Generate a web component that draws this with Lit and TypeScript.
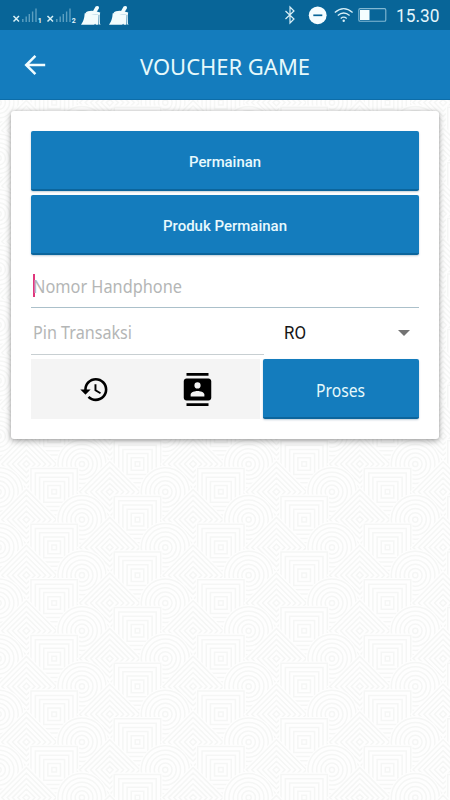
import { LitElement, html, svg, css } from "lit";
import { customElement, property } from "lit/decorators.js";

const COL = 27.78;
const ROW = 55.6;

const rings = [2.6, 6.8, 11, 15.3, 19.6, 24];
const circlePath = rings.map((r) => `M${-r} 0a${r} ${r} 0 1 0 ${2 * r} 0a${r} ${r} 0 1 0 ${-2 * r} 0z`).join("");
const squarePath = [2.3, 6.3, 10.4, 14.6, 18.8, 23.2].map((r) => `M${-r} ${-r}h${2 * r}v${2 * r}h${-2 * r}z`).join("");
const diamondPath = [3.4, 8.6, 13.9, 19.2, 24.6, 30].map((r) => `M0 ${-r}L${r} 0L0 ${r}L${-r} 0z`).join("");
const shapes = [circlePath, diamondPath, squarePath];

/** Repeating circles, diamonds and squares behind the form. */
@customElement("pattern-backdrop")
export class PatternBackdrop extends LitElement {
  static styles = css`
    :host { display: block; }
    svg { display: block; width: 100%; height: 100%; }
    .shape { stroke: #f5f6f5; stroke-width: 1.5; fill: none; }
    .cover { fill: #fefefe; stroke: none; }
  `;
  render() {
    const items = [];
    for (let half = -1; half < 28; half++) {
      for (let c = -1; c < 18; c++) {
        if ((((c + half) % 2) + 2) % 2 !== 0) continue;
        const kind = (c + 3) % 3;
        const x = -1.4 + c * COL;
        const y = 2.6 + (half * ROW) / 2;
        const cover =
          kind === 0 ? svg`<circle class="cover" r="26"/>`
          : kind === 1 ? svg`<path class="cover" d="M0-33L33 0L0 33L-33 0z"/>`
          : svg`<path class="cover" d="M-25-25h50v50h-50z"/>`;
        items.push(svg`<g transform="translate(${x} ${y})">${cover}<path class="shape" d=${shapes[kind]}/></g>`);
      }
    }
    return html`<svg viewBox="0 0 450 700" preserveAspectRatio="xMidYMin slice">${items}</svg>`;
  }
}

/** A single line of text fitted to a given width. */
@customElement("fit-text")
export class FitText extends LitElement {
  @property() text = "";
  @property({ type: Number }) width = 100;
  @property({ type: Number }) size = 18;
  static styles = css`
    :host { display: block; line-height: 0; }
    svg { display: block; overflow: visible; }
    text { fill: currentColor; }
  `;
  render() {
    return html`<svg width=${this.width} height=${this.size}>
      <text x="0" y=${this.size * 0.86} font-size=${this.size} textLength=${this.width} lengthAdjust="spacingAndGlyphs">${this.text}</text>
    </svg>`;
  }
}

@customElement("status-bar")
export class StatusBar extends LitElement {
  static styles = css`
    :host { display: block; height: 30px; background: #086598; color: #e4f6fb; }
    svg { display: block; }
    .digit { font: 700 7px Roboto, sans-serif; fill: #e4f6fb; }
    .clock { font: 400 17.5px Roboto, sans-serif; fill: #e4f6fb; }
  `;
  private signal(x: number, n: string) {
    return svg`<g transform="translate(${x} 0)">
      <path d="M0.5 16l5.5 5.5M6 16l-5.5 5.5" stroke="#d8f0f5" stroke-width="1.5"/>
      <path d="M9.8 22v-3M13.2 22v-5.5M16.3 22v-8M19.6 22v-10.5M23 22v-13.5" stroke="#5c9fc0" stroke-width="1.4"/>
      <text class="digit" x="24.7" y="23">${n}</text>
    </g>`;
  }
  private broom(x: number) {
    return svg`<g transform="translate(${x} 0)" fill="#f2fcfd">
      <path d="M11.5 12L14.6 6.6Q15.8 5.4 17.4 6.3Q18.4 7.2 17.8 8.4L15.6 12z"/>
      <path d="M7 11.2Q12 9.9 19.2 12.4L18.8 15L4.2 13.8Q5 11.6 7 11.2z"/>
      <path d="M3.7 13.2L17 14.8L17.2 24.8H14.8L14.2 23.8L13.2 24.8H0Q3.4 20 3.7 13.2z"/>
      <path d="M17.3 14.5h1.4l.2 9 .8 1.1h-2z"/>
    </g>`;
  }
  render() {
    return html`<svg width="450" height="30">
      ${this.signal(13, "1")}${this.signal(47, "2")}
      ${this.broom(81)}${this.broom(109)}
      <path d="M285.5 11l8.5 8-4 4V7l4 4-8.5 8" fill="none" stroke="#d8eff7" stroke-width="1.2"/>
      <circle cx="317.7" cy="15.3" r="8.9" fill="#f5fdff"/>
      <path d="M313.3 15.3h9" stroke="#086598" stroke-width="1.7"/>
      <g fill="none" stroke="#d8eff7" stroke-width="1.3">
        <path d="M334.8 12.4Q343.7 5 352.6 12.4"/><path d="M337.8 15.6Q343.7 10.4 349.6 15.6"/><path d="M340.7 18.4Q343.7 16 346.7 18.4"/>
      </g>
      <circle cx="343.7" cy="20.8" r="1.2" fill="#d8eff7"/>
      <rect x="358.8" y="8.6" width="27" height="12.6" rx="1.3" fill="none" stroke="#82b9d3" stroke-width="1.1"/>
      <rect x="360" y="10" width="9.5" height="10" fill="#f5fdff"/>
      <text class="clock" x="396" y="22" textLength="43.5" lengthAdjust="spacingAndGlyphs">15.30</text>
    </svg>`;
  }
}

@customElement("app-root")
export class AppRoot extends LitElement {
  static styles = css`
    :host { display: flex; flex-direction: column; height: 800px; width: 450px; background: #fefefe; overflow: hidden; font-family: "Noto Sans", "Open Sans", sans-serif; }
    .bar { height: 70px; box-sizing: border-box; flex: none; background: #147cbd; border-bottom: 1px solid #0d6da8; display: grid; grid-template-columns: 140px 1fr; align-items: center; color: #e6f9fb; }
    .back { display: block; margin-left: 21px; }
    .title { margin-top: 5px; }
    .body { position: relative; flex: 1; min-height: 0; padding: 11px 11px 0; }
    .backdrop { position: absolute; inset: 0; }
    .card { position: relative; box-sizing: border-box; height: 328px; padding: 20px 20px 0; background: #fff; border-radius: 3px; box-shadow: 0 2px 6px rgba(0,0,0,.34), 0 0 3px rgba(0,0,0,.15); display: flex; flex-direction: column; }
    .btn { display: flex; align-items: center; justify-content: center; box-sizing: border-box; background: #147cbd; color: #e8f9fd; border: 0; border-bottom: 2px solid #0c659c; border-radius: 2px; padding: 0; box-shadow: 0 1px 2px rgba(0,60,100,.25); font-family: inherit; }
    .wide { height: 60px; flex: none; margin-bottom: 4px; font-family: Roboto, sans-serif; font-weight: 500; padding-top: 3px; }
    .phone { height: 49px; box-sizing: border-box; border-bottom: 1px solid #abc0ca; display: flex; align-items: center; padding-top: 7px; color: #b4b6b6; }
    .caret { width: 2px; height: 23px; background: #e0367c; margin: -2px -2px 0 2px; }
    .row { display: grid; grid-template-columns: 232px 156px; }
    .pin { height: 47px; box-sizing: border-box; border-bottom: 1px solid #c8cfd2; display: flex; align-items: center; color: #b4b6b6; padding: 4px 0 0 2px; margin-right: -1px; }
    .select { display: flex; align-items: center; justify-content: space-between; padding: 3px 9px 0 21px; color: #161616; font-family: Roboto, sans-serif; }
    .arrow { width: 0; height: 0; border: 6.5px solid transparent; border-top: 6px solid #737373; border-bottom: 0; margin-top: -1px; }
    .actions { margin-top: 4px; height: 60px; }
    .tools { background: #f4f4f4; margin-right: 3px; display: grid; grid-template-columns: 126px 80px; align-items: center; }
    .tools svg { display: block; justify-self: center; }
    .go { color: #e6f9fb; padding: 5px 2px 0 0; }
  `;
  render() {
    return html`
      <status-bar></status-bar>
      <header class="bar">
        <svg class="back" width="28" height="28" viewBox="0 0 28 28" fill="none" stroke="#f0fcff" stroke-width="2.5"><path d="M24.2 14H5.5M14.4 4.8L5.2 14L14.4 23.2"/></svg>
        <fit-text class="title" text="VOUCHER GAME" width="170" size="22.5"></fit-text>
      </header>
      <main class="body">
        <pattern-backdrop class="backdrop"></pattern-backdrop>
        <section class="card">
          <button class="btn wide"><fit-text text="Permainan" width="72" size="15"></fit-text></button>
          <button class="btn wide"><fit-text text="Produk Permainan" width="124" size="15"></fit-text></button>
          <div class="phone"><span class="caret"></span><fit-text text="Nomor Handphone" width="149" size="17.5"></fit-text></div>
          <div class="row">
            <div class="pin"><fit-text text="Pin Transaksi" width="99" size="17.5"></fit-text></div>
            <div class="select"><fit-text text="RO" width="22" size="17.5"></fit-text><span class="arrow"></span></div>
          </div>
          <div class="row actions">
            <div class="tools">
              <svg width="31" height="31" viewBox="0 0 24 24"><path d="M13 3a9 9 0 0 0-9 9H1l3.89 3.89.07.14L9 12H6c0-3.87 3.13-7 7-7s7 3.13 7 7-3.13 7-7 7c-1.93 0-3.68-.79-4.94-2.06l-1.42 1.42A8.954 8.954 0 0 0 13 21a9 9 0 0 0 0-18zm-1 5v5l4.28 2.54.72-1.21-3.5-2.08V8z"/></svg>
              <svg width="33" height="33" viewBox="0 0 24 24"><path d="M20 0H4v2h16zM4 24h16v-2H4zM20 4H4c-1.1 0-2 .9-2 2v12c0 1.1.9 2 2 2h16c1.1 0 2-.9 2-2V6c0-1.1-.9-2-2-2zm-8 2.75a2.25 2.25 0 1 1 0 4.5 2.25 2.25 0 0 1 0-4.5zM17 17H7v-1.5c0-1.67 3.33-2.5 5-2.5s5 .83 5 2.5z"/></svg>
            </div>
            <button class="btn go"><fit-text text="Proses" width="49" size="17.5"></fit-text></button>
          </div>
        </section>
      </main>`;
  }
}
